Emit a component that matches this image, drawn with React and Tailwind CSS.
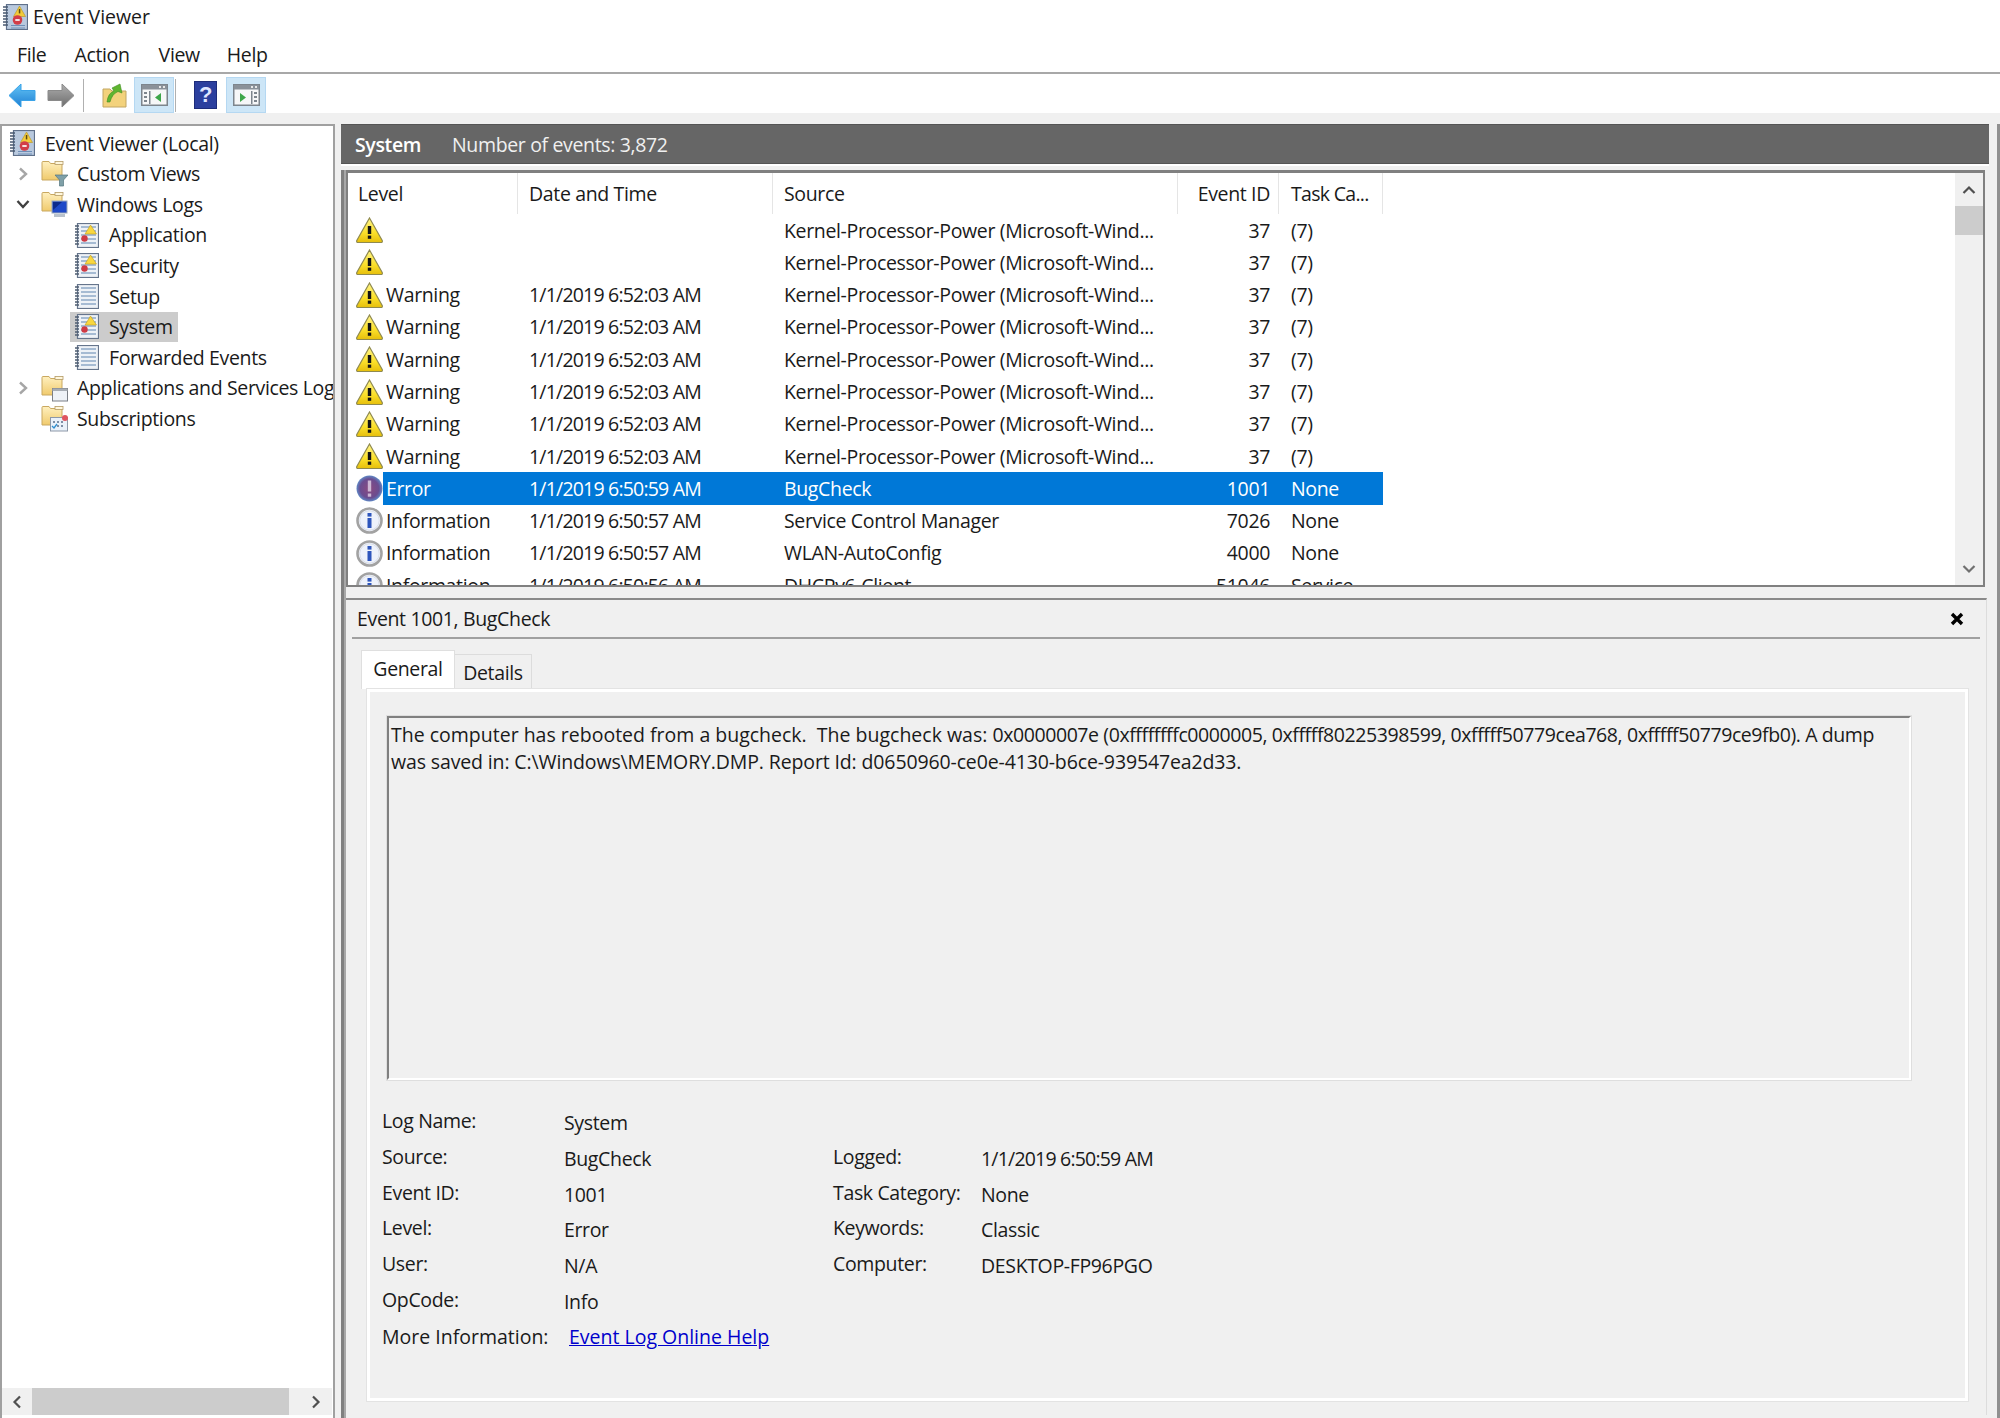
// App.jsx
import React from 'react';

const rows = [
  { icon: 'warn', level: '', date: '', source: 'Kernel-Processor-Power (Microsoft-Wind...', id: '37', task: '(7)' },
  { icon: 'warn', level: '', date: '', source: 'Kernel-Processor-Power (Microsoft-Wind...', id: '37', task: '(7)' },
  { icon: 'warn', level: 'Warning', date: '1/1/2019 6:52:03 AM', source: 'Kernel-Processor-Power (Microsoft-Wind...', id: '37', task: '(7)' },
  { icon: 'warn', level: 'Warning', date: '1/1/2019 6:52:03 AM', source: 'Kernel-Processor-Power (Microsoft-Wind...', id: '37', task: '(7)' },
  { icon: 'warn', level: 'Warning', date: '1/1/2019 6:52:03 AM', source: 'Kernel-Processor-Power (Microsoft-Wind...', id: '37', task: '(7)' },
  { icon: 'warn', level: 'Warning', date: '1/1/2019 6:52:03 AM', source: 'Kernel-Processor-Power (Microsoft-Wind...', id: '37', task: '(7)' },
  { icon: 'warn', level: 'Warning', date: '1/1/2019 6:52:03 AM', source: 'Kernel-Processor-Power (Microsoft-Wind...', id: '37', task: '(7)' },
  { icon: 'warn', level: 'Warning', date: '1/1/2019 6:52:03 AM', source: 'Kernel-Processor-Power (Microsoft-Wind...', id: '37', task: '(7)' },
  { icon: 'error', level: 'Error', date: '1/1/2019 6:50:59 AM', source: 'BugCheck', id: '1001', task: 'None', selected: true },
  { icon: 'info', level: 'Information', date: '1/1/2019 6:50:57 AM', source: 'Service Control Manager', id: '7026', task: 'None' },
  { icon: 'info', level: 'Information', date: '1/1/2019 6:50:57 AM', source: 'WLAN-AutoConfig', id: '4000', task: 'None' },
  { icon: 'info', level: 'Information', date: '1/1/2019 6:50:56 AM', source: 'DHCPv6-Client', id: '51046', task: 'Service' },
];

const leftFields = [
  ['Log Name:', 'System'],
  ['Source:', 'BugCheck'],
  ['Event ID:', '1001'],
  ['Level:', 'Error'],
  ['User:', 'N/A'],
  ['OpCode:', 'Info'],
];

const rightFields = [
  ['Logged:', '1/1/2019 6:50:59 AM'],
  ['Task Category:', 'None'],
  ['Keywords:', 'Classic'],
  ['Computer:', 'DESKTOP-FP96PGO'],
];

function WarnIcon() {
  return (
    <svg width="27" height="26" viewBox="0 0 27 26" className="shrink-0">
      <defs>
        <linearGradient id="warnFill" x1="0" y1="0" x2="0" y2="1">
          <stop offset="0" stopColor="#fff489" />
          <stop offset="0.6" stopColor="#fbe02a" />
          <stop offset="1" stopColor="#e6bf0c" />
        </linearGradient>
      </defs>
      <path d="M13.5 1 L26.2 23.5 Q26.8 25.5 25 25.5 H2 Q.2 25.5 .8 23.5 Z" fill="url(#warnFill)" stroke="#8f8a50" strokeWidth="1.2" />
      <rect x="11.8" y="9" width="3.4" height="8" fill="#141414" />
      <rect x="11.8" y="18.6" width="3.4" height="3.2" fill="#141414" />
    </svg>
  );
}

function ErrorIcon() {
  return (
    <svg width="27" height="27" viewBox="0 0 27 27" className="shrink-0">
      <defs>
        <radialGradient id="errorFill" cx="0.5" cy="0.5" r="0.5">
          <stop offset="0" stopColor="#8b4a80" />
          <stop offset="0.72" stopColor="#6a4c90" />
          <stop offset="1" stopColor="#5f87c4" />
        </radialGradient>
      </defs>
      <circle cx="13.5" cy="13.5" r="13" fill="url(#errorFill)" />
      <rect x="11.8" y="5.5" width="3.4" height="11" fill="#cdb7d4" />
      <rect x="11.8" y="18.5" width="3.4" height="3.2" fill="#cdb7d4" />
    </svg>
  );
}

function InfoIcon() {
  return (
    <svg width="27" height="27" viewBox="0 0 27 27" className="shrink-0">
      <circle cx="13.5" cy="13.5" r="12" fill="#f6f8fd" stroke="#a2a2a2" strokeWidth="2.6" />
      <circle cx="13.5" cy="13.5" r="9.8" fill="#eef2fb" stroke="#d6dbe6" strokeWidth="1" />
      <rect x="11.5" y="6" width="4" height="3.6" fill="#2d55bc" />
      <rect x="11.5" y="11" width="4" height="10" fill="#2d55bc" />
    </svg>
  );
}

function LevelIcon({ type }) {
  if (type === 'warn') return <WarnIcon />;
  if (type === 'error') return <ErrorIcon />;
  return <InfoIcon />;
}

function LogIcon({ alert }) {
  return (
    <svg width="24" height="25" viewBox="0 0 24 25" className="shrink-0">
      <rect x="2.5" y="0.5" width="21" height="24" fill="#eef2f7" stroke="#66758c" strokeWidth="1.2" />
      <path d="M0 3h4M0 6h4M0 9h4M0 12h4M0 15h4M0 18h4M0 21h4" stroke="#4f5d72" strokeWidth="1.5" />
      {[4, 8, 12, 16, 20].map(y => (
        <path key={y} d={`M6 ${y}h15`} stroke="#7f9dc0" strokeWidth="1.3" />
      ))}
      {alert && (
        <>
          <path d="M15.5 2 L21.5 11 H10 Z" fill="#f8d73f" stroke="#c09a20" strokeWidth="0.6" />
          <circle cx="9.5" cy="15.5" r="3.2" fill="#cf3a45" />
        </>
      )}
    </svg>
  );
}

function AppIcon() {
  return (
    <svg width="25" height="26" viewBox="0 0 25 26" className="shrink-0">
      <rect x="3.5" y="0.5" width="21" height="25" fill="#b9c9de" stroke="#5f708a" strokeWidth="1.2" />
      <path d="M0 3h5M0 6h5M0 9h5M0 12h5M0 15h5M0 18h5M0 21h5" stroke="#4a5a72" strokeWidth="1.5" />
      <path d="M8 21.5h14M8 24h14" stroke="#6f8fb8" />
      <path d="M16.5 2 L22.5 12.5 H10.5 Z" fill="#f2cb3a" stroke="#b79220" strokeWidth="0.6" />
      <rect x="15.8" y="5" width="1.5" height="4.4" fill="#5c4a10" />
      <circle cx="14.5" cy="16" r="4.8" fill="#d23d48" />
      <rect x="12.3" y="15" width="4.4" height="2" fill="#f6dfe0" />
    </svg>
  );
}

function Folder({ children }) {
  return (
    <svg width="27" height="27" viewBox="0 0 27 27" className="shrink-0">
      <defs>
        <linearGradient id="folderFill" x1="0" y1="0" x2="0" y2="1">
          <stop offset="0" stopColor="#fff0bf" />
          <stop offset="1" stopColor="#f0ca6c" />
        </linearGradient>
      </defs>
      <path d="M1 20 V2.5 Q1 1.5 2 1.5 H8 L9.5 3.5 H21 V20 Z" fill="url(#folderFill)" stroke="#c9a860" />
      <rect x="14" y="1.5" width="8" height="3" fill="#fff7dc" stroke="#b49a64" strokeWidth="0.8" />
      {children}
    </svg>
  );
}

function TreeIcon({ type }) {
  if (type === 'filter')
    return (
      <Folder>
        <path d="M14 15h13l-4.5 5v6h-4v-6z" fill="#7fa0a8" stroke="#55757e" strokeWidth="0.7" />
      </Folder>
    );
  if (type === 'computer')
    return (
      <Folder>
        <rect x="11" y="10" width="15" height="12" fill="#1e49c8" stroke="#9aa7b8" />
        <path d="M12 11 l9 0 l-9 8z" fill="#0d2a8c" />
        <rect x="13" y="23" width="11" height="3" fill="#b9c2cc" />
      </Folder>
    );
  if (type === 'window')
    return (
      <Folder>
        <rect x="11.5" y="13.5" width="15" height="12.5" fill="#eef2f7" stroke="#7a7f86" />
        <rect x="11.5" y="13.5" width="15" height="2.5" fill="#a7adb4" />
      </Folder>
    );
  return (
    <Folder>
      <rect x="9.5" y="12.5" width="17" height="13.5" fill="#eaf1fa" stroke="#8d98a8" />
      <path d="M12 17h2M16 17h2M20 17h2M16 21h2M20 21h2" stroke="#5b6f8a" strokeWidth="1.6" />
      <path d="M11 21l2 2 3-4" stroke="#2f8fd0" strokeWidth="1.3" fill="none" />
      <circle cx="24" cy="13" r="3" fill="#e05560" />
    </Folder>
  );
}

function Chevron({ dir }) {
  if (dir === 'down')
    return (
      <svg width="14" height="14" viewBox="0 0 14 14" className="shrink-0">
        <path d="M1.5 4 L7 10 L12.5 4" fill="none" stroke="#404040" strokeWidth="2.4" />
      </svg>
    );
  return (
    <svg width="14" height="14" viewBox="0 0 14 14" className="shrink-0">
      <path d="M4 1.5 L10 7 L4 12.5" fill="none" stroke="#a6a6a6" strokeWidth="2.4" />
    </svg>
  );
}

function PaneIcon({ flip }) {
  return (
    <svg width="27" height="22" viewBox="0 0 27 22">
      <rect x="0.75" y="0.75" width="25.5" height="20.5" fill="#f6f7f8" stroke="#7d858d" strokeWidth="1.5" />
      <rect x="1" y="1" width="25" height="4.5" fill="#8a9199" />
      <rect x="18" y="2" width="2" height="2" fill="#e8e8e8" />
      <rect x="22" y="2" width="2" height="2" fill="#e8e8e8" />
      {flip ? (
        <>
          <rect x="18" y="7" width="1.5" height="13" fill="#7d858d" />
          <path d="M21 9h3M21 13h3M21 17h3" stroke="#7d858d" strokeWidth="1.8" />
          <path d="M7 9 L13 13.5 L7 18 Z" fill="#3da64a" />
        </>
      ) : (
        <>
          <rect x="8" y="7" width="1.5" height="13" fill="#7d858d" />
          <path d="M3 9h3M3 13h3M3 17h3" stroke="#7d858d" strokeWidth="1.8" />
          <path d="M20 9 L14 13.5 L20 18 Z" fill="#3da64a" />
        </>
      )}
    </svg>
  );
}

function Toolbar() {
  return (
    <div className="h-[39px] bg-white flex items-center pl-[8px] pt-[3px] shrink-0">
      <svg width="28" height="25" viewBox="0 0 28 25">
        <defs>
          <linearGradient id="backFill" x1="0" y1="0" x2="0" y2="1">
            <stop offset="0" stopColor="#63c4f6" />
            <stop offset="1" stopColor="#1f7fd2" />
          </linearGradient>
        </defs>
        <path d="M1 12.5 L13 1 V7.5 H27 V17.5 H13 V24 Z" fill="url(#backFill)" stroke="#3aa3e8" />
      </svg>
      <svg width="28" height="25" viewBox="0 0 28 25" className="ml-[11px]">
        <defs>
          <linearGradient id="forwardFill" x1="0" y1="0" x2="0" y2="1">
            <stop offset="0" stopColor="#aeaeae" />
            <stop offset="1" stopColor="#6d6d6d" />
          </linearGradient>
        </defs>
        <path d="M27 12.5 L15 1 V7.5 H1 V17.5 H15 V24 Z" fill="url(#forwardFill)" stroke="#8a8a8a" />
      </svg>
      <div className="ml-[8px] w-[1px] h-[33px] bg-[#b0b0b0]" />
      <svg width="25" height="25" viewBox="0 0 25 25" className="ml-[18px]">
        <path d="M1 24 V6 H8 L10 8 H24 V24 Z" fill="#f3d27c" stroke="#c2a662" />
        <path d="M5 19 Q6 10 12 8 L10 5 L18 1 L20 10 L16 8.5 Q10 11 8 19 Z" fill="#5fb52f" stroke="#3f8f22" strokeWidth="0.6" />
      </svg>
      <div className="ml-[7px] w-[40px] h-[36px] bg-[#cde6f7] border border-[#b5d8f2] flex items-center justify-center">
        <PaneIcon />
      </div>
      <div className="ml-[1px] w-[1px] h-[33px] bg-[#b0b0b0]" />
      <div className="ml-[18px] w-[23px] h-[28px] bg-[#2b3f9e] border border-[#1d2c7a] flex items-center justify-center">
        <span className="text-[#dfe6ff] font-bold text-[22px] leading-none font-['Liberation_Sans',sans-serif]">?</span>
      </div>
      <div className="ml-[9px] w-[40px] h-[36px] bg-[#cde6f7] border border-[#b5d8f2] flex items-center justify-center">
        <PaneIcon flip />
      </div>
    </div>
  );
}

function Tree() {
  return (
    <div className="w-[335px] shrink-0 border-x-2 border-t-2 border-[#a0a0a0] bg-white flex flex-col overflow-hidden">
      <div className="flex-1 pt-[2px] overflow-hidden">
        <div className="h-[30.6px] flex items-center pl-[8px] whitespace-nowrap">
          <AppIcon />
          <span className="ml-[10px]">Event Viewer (Local)</span>
        </div>
        <div className="h-[30.6px] flex items-center pl-[14px] whitespace-nowrap">
          <Chevron />
          <span className="ml-[11px] flex"><TreeIcon type="filter" /></span>
          <span className="ml-[9px]">Custom Views</span>
        </div>
        <div className="h-[30.6px] flex items-center pl-[14px] whitespace-nowrap">
          <Chevron dir="down" />
          <span className="ml-[11px] flex"><TreeIcon type="computer" /></span>
          <span className="ml-[9px]">Windows Logs</span>
        </div>
        <div className="h-[30.6px] flex items-center pl-[73px] whitespace-nowrap">
          <LogIcon alert />
          <span className="ml-[10px]">Application</span>
        </div>
        <div className="h-[30.6px] flex items-center pl-[73px] whitespace-nowrap">
          <LogIcon alert />
          <span className="ml-[10px]">Security</span>
        </div>
        <div className="h-[30.6px] flex items-center pl-[73px] whitespace-nowrap">
          <LogIcon />
          <span className="ml-[10px]">Setup</span>
        </div>
        <div className="h-[30.6px] flex items-center ml-[68px] pl-[5px] w-[108px] bg-[#cccccc] whitespace-nowrap">
          <LogIcon alert />
          <span className="ml-[10px]">System</span>
        </div>
        <div className="h-[30.6px] flex items-center pl-[73px] whitespace-nowrap">
          <LogIcon />
          <span className="ml-[10px]">Forwarded Events</span>
        </div>
        <div className="h-[30.6px] flex items-center pl-[14px] whitespace-nowrap">
          <Chevron />
          <span className="ml-[11px] flex"><TreeIcon type="window" /></span>
          <span className="ml-[9px]">Applications and Services Logs</span>
        </div>
        <div className="h-[30.6px] flex items-center pl-[39px] whitespace-nowrap">
          <TreeIcon type="subs" />
          <span className="ml-[9px]">Subscriptions</span>
        </div>
      </div>
      <div className="h-[27px] mb-[3px] mr-[1px] bg-[#f0f0f0] flex items-center shrink-0">
        <div className="w-[30px] flex justify-center">
          <svg width="10" height="14" viewBox="0 0 10 14"><path d="M8 1.5 L2.5 7 L8 12.5" fill="none" stroke="#505050" strokeWidth="2.2" /></svg>
        </div>
        <div className="w-[257px] h-[27px] bg-[#cccccc]" />
        <div className="flex-1 flex justify-center pl-[10px]">
          <svg width="10" height="14" viewBox="0 0 10 14"><path d="M2 1.5 L7.5 7 L2 12.5" fill="none" stroke="#505050" strokeWidth="2.2" /></svg>
        </div>
      </div>
    </div>
  );
}

function EventList() {
  return (
    <div className="h-[417px] shrink-0 border-t-[3px] border-l-[2px] border-b-2 border-r-2 border-[#808080] bg-white flex overflow-hidden mr-[3px]">
      <div className="flex-1 overflow-hidden">
        <div className="h-[41px] flex items-center whitespace-nowrap">
          <div className="w-[170px] h-full pl-[10px] flex items-center border-r border-[#e5e5e5]">Level</div>
          <div className="w-[255px] h-full pl-[11px] flex items-center border-r border-[#e5e5e5]">Date and Time</div>
          <div className="w-[405px] h-full pl-[11px] flex items-center border-r border-[#e5e5e5]">Source</div>
          <div className="w-[101px] h-full pr-[8px] flex items-center justify-end border-r border-[#e5e5e5]">Event ID</div>
          <div className="w-[104px] h-full pl-[12px] flex items-center border-r border-[#e5e5e5] tracking-[-0.7px]">Task Ca...</div>
        </div>
        {rows.map((row, i) => (
          <div key={i} className="h-[32.3px] flex items-center whitespace-nowrap">
            <div className="w-[35px] pl-[8px] flex items-center"><LevelIcon type={row.icon} /></div>
            <div className={row.selected ? 'w-[1000px] h-full flex items-center bg-[#0078d7] text-white' : 'w-[1000px] h-full flex items-center'}>
              <div className="w-[136px] pl-[3px]">{row.level}</div>
              <div className="w-[255px] pl-[10px] tracking-[-0.8px]">{row.date}</div>
              <div className="w-[405px] pl-[10px]">{row.source}</div>
              <div className="w-[100px] pr-[9px] text-right">{row.id}</div>
              <div className="w-[104px] pl-[12px]">{row.task}</div>
            </div>
          </div>
        ))}
      </div>
      <div className="w-[28px] bg-[#f0f0f0] flex flex-col shrink-0">
        <div className="h-[33px] flex items-center justify-center">
          <svg width="14" height="10" viewBox="0 0 14 10"><path d="M1.5 8 L7 2.5 L12.5 8" fill="none" stroke="#505050" strokeWidth="2.2" /></svg>
        </div>
        <div className="h-[29px] bg-[#cccccc]" />
        <div className="flex-1" />
        <div className="h-[33px] flex items-center justify-center">
          <svg width="14" height="10" viewBox="0 0 14 10"><path d="M1.5 2 L7 7.5 L12.5 2" fill="none" stroke="#707070" strokeWidth="2.2" /></svg>
        </div>
      </div>
    </div>
  );
}

function Detail() {
  return (
    <div className="flex-1 mt-[11px] border-t-2 border-t-[#8a8a8a] border-r border-r-[#dcdcdc] mb-[3px] mr-[1px] flex flex-col min-h-0">
      <div className="h-[37px] pl-[11px] pr-[22px] flex items-center justify-between shrink-0">
        <span>Event 1001, BugCheck</span>
        <svg width="14" height="14" viewBox="0 0 14 14"><path d="M2 2 L12 12 M12 2 L2 12" stroke="#000" strokeWidth="3.4" /></svg>
      </div>
      <div className="h-[2px] mx-[6px] bg-[#a0a0a0] shrink-0" />
      <div className="flex-1 flex flex-col ml-[15px] mr-[18px] mb-[14px] mt-[11px] min-h-0">
        <div className="flex items-end h-[39px] shrink-0">
          <div className="w-[94px] h-[39px] bg-white pb-[3px] flex items-center justify-center border-t border-x border-[#dfdfdf]">General</div>
          <div className="w-[77px] h-[35px] pt-[2px] flex items-center justify-center border-t border-r border-[#dcdcdc]">Details</div>
        </div>
        <div className="flex-1 ml-[6px] border-[3px] border-white bg-[#f0f0f0] outline outline-1 outline-[#e3e3e3] pt-[24px] pl-[17px] pr-[54px] min-h-0">
          <div className="h-[364px] border-2 border-t-[#808080] border-l-[#808080] border-r-white border-b-white outline outline-1 outline-[#dedede] pl-[2px] pt-[4px] leading-[26.5px] whitespace-pre">
            <div>
              <span className="tracking-[0px]">The computer has rebooted from a bugcheck.  The bugcheck was: </span>
              <span className="tracking-[-0.41px]">0x0000007e (0xffffffffc0000005, 0xfffff80225398599, 0xfffff50779cea768, 0xfffff50779ce9fb0). A dump</span>
            </div>
            <div className="tracking-[-0.13px]">was saved in: C:\Windows\MEMORY.DMP. Report Id: d0650960-ce0e-4130-b6ce-939547ea2d33.</div>
          </div>
          <div className="flex mt-[25px] -ml-[5px]">
            <div className="w-[451px]">
              {leftFields.map(([label, value]) => (
                <div key={label} className="h-[35.7px] flex items-center whitespace-nowrap">
                  <span className="w-[182px] -translate-y-[2px]">{label}</span>
                  <span>{value}</span>
                </div>
              ))}
              <div className="h-[35.7px] flex items-center whitespace-nowrap tracking-[0px]">
                <span className="w-[187px]">More Information:</span>
                <span className="text-[#0000cc] underline">Event Log Online Help</span>
              </div>
            </div>
            <div className="pt-[35.7px]">
              {rightFields.map(([label, value]) => (
                <div key={label} className="h-[35.7px] flex items-center whitespace-nowrap">
                  <span className="w-[148px] -translate-y-[2px]">{label}</span>
                  <span className={label === 'Logged:' ? 'tracking-[-0.8px]' : ''}>{value}</span>
                </div>
              ))}
            </div>
          </div>
        </div>
      </div>
    </div>
  );
}

export default function App() {
  return (
    <div className="w-[2000px] h-[1418px] overflow-hidden bg-white flex flex-col font-['Open_Sans',sans-serif] text-[19.5px] text-[#1a1a1a] tracking-[-0.35px]">
      <div className="h-[33px] flex items-center pl-[3px] shrink-0">
        <AppIcon />
        <span className="ml-[5px] tracking-[0px]">Event Viewer</span>
      </div>
      <div className="h-[41px] pt-[5px] border-b-2 border-[#a8a8a8] flex items-center pl-[17px] shrink-0">
        <span>File</span>
        <span className="ml-[28px]">Action</span>
        <span className="ml-[29px]">View</span>
        <span className="ml-[27px]">Help</span>
      </div>
      <Toolbar />
      <div className="flex-1 flex bg-[#f0f0f0] pt-[11px] min-h-0">
        <Tree />
        <div className="w-[6px] bg-[#f0f0f0]" />
        <div className="flex-1 flex flex-col border-r-[3px] border-r-[#909090] min-h-0">
          <div className="h-[40px] w-[1648px] pt-[2px] bg-[#666666] border-y border-[#555555] flex items-center pl-[14px] text-white shrink-0">
            <span className="font-semibold w-[97px]">System</span>
            <span className="text-[#f0f0f0]">Number of events: 3,872</span>
          </div>
          <div className="h-[2px] w-[1648px] bg-white shrink-0" />
          <div className="flex-1 flex min-h-0 pt-[4px]">
            <div className="w-[3px] bg-[#808080] shrink-0" />
            <div className="w-[2px] bg-[#a8a8a8] shrink-0" />
            <div className="flex-1 flex flex-col min-w-0 pr-[9px] min-h-0">
              <EventList />
              <Detail />
            </div>
          </div>
        </div>
      </div>
    </div>
  );
}
